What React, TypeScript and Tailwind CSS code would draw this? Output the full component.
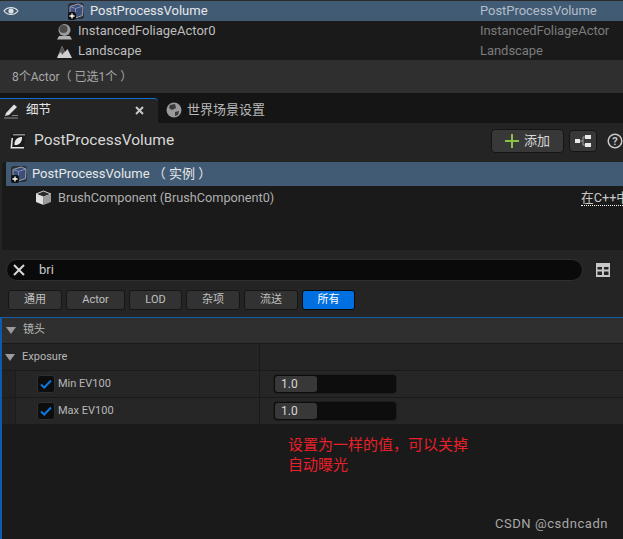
import React from "react";

function VolumeIcon() {
  return (
    <svg width="18" height="18" viewBox="0 0 18 18" className="shrink-0">
      <rect x="1" y="1" width="16" height="16" rx="3" fill="#2b2f3a" />
      <path d="M3 4.5 L11 2 L16 4 L15.5 13.5 L8 16 L3 13.5 Z" fill="#3d4f78" stroke="#9aa0ad" strokeWidth="1" />
      <path d="M3 4.5 L8.5 6.5 L16 4 M8.5 6.5 V16" fill="none" stroke="#7d8dbd" strokeWidth="1" />
      <rect x="1" y="10" width="8" height="8" rx="2" fill="#111" />
      <path d="M5 11.5 V16.5 M2.5 14 H7.5" stroke="#fff" strokeWidth="1.3" />
    </svg>
  );
}

function Eye() {
  return (
    <svg width="16" height="12" viewBox="0 0 16 12" className="shrink-0">
      <path d="M1 6 C4 1.5 12 1.5 15 6 C12 10.5 4 10.5 1 6 Z" fill="none" stroke="#e0e0e0" strokeWidth="1.2" />
      <circle cx="8" cy="6" r="2.6" fill="#e0e0e0" />
    </svg>
  );
}

function OutlinerRow({
  icon,
  name,
  type,
  selected,
  indent,
  h,
}: {
  icon: React.ReactNode;
  name: string;
  type: string;
  selected?: boolean;
  indent: string;
  h: string;
}) {
  return (
    <div className={`flex items-center ${h} ${selected ? "bg-[#415b75]" : "bg-[#1a1a1a]"}`}>
      <div className="w-[480px] flex items-center relative">
        {selected && (
          <span className="absolute left-[3px] top-1/2 -translate-y-1/2 flex">
            <Eye />
          </span>
        )}
        <div className={`${indent} flex items-center`}>
          <span className="w-[18px] h-[18px] flex items-center justify-center">{icon}</span>
          <span className={`ml-[5px] text-[13px] ${selected ? "text-[#e8e8e8]" : "text-[#bdbdbd]"}`}>{name}</span>
        </div>
      </div>
      <span className={`text-[13px] tracking-[-0.05px] ${selected ? "text-[#b4bcc6]" : "text-[#7c7c7c]"}`}>{type}</span>
    </div>
  );
}

function Filter({ label, w, active }: { label: string; w: string; active?: boolean }) {
  return (
    <div
      className={`${w} h-5 rounded-[3px] border flex items-center justify-center text-[11px] ${
        active ? "bg-[#0070e0] border-[#0a0a0a] text-white" : "bg-[#323232] border-[#151515] text-[#c0c0c0]"
      }`}
    >
      {label}
    </div>
  );
}

function Check() {
  return (
    <div className="w-[18px] h-[18px] rounded-[3px] bg-[#0d0d0d] border border-[#2f2f2f] flex items-center justify-center">
      <svg width="12" height="10" viewBox="0 0 12 10">
        <path d="M1 5.5 L4.2 8.5 L11 1.5" fill="none" stroke="#0f75e0" strokeWidth="2" />
      </svg>
    </div>
  );
}

function PropRow({ label }: { label: string }) {
  return (
    <div className="h-[27px] flex border-b border-[#1a1a1a] bg-[#262626]">
      <div className="w-[14px] shrink-0 bg-[#222222] border-r border-[#1c1c1c]" />
      <div className="w-[243px] shrink-0 flex items-center pl-[21px]">
        <Check />
        <span className="ml-[3px] text-[11px] text-[#b8b8b8]">{label}</span>
      </div>
      <div className="flex-1 flex items-center border-l border-[#1a1a1a] pl-[13px]">
        <div className="w-[124px] h-[20px] rounded-[4px] bg-[#0d0d0d] border border-[#1e1e1e] flex p-[1px]">
          <div className="w-[42px] rounded-[3px] bg-[#383838] text-[12px] text-[#d8d8d8] pl-[6px] leading-[16px]">1.0</div>
        </div>
      </div>
    </div>
  );
}

export default function App() {
  return (
    <div
      className="relative w-[623px] h-[539px] overflow-hidden bg-[#1a1a1a]"
      style={{ fontFamily: 'Roboto, "Noto Sans CJK SC", sans-serif' }}
    >
      <div className="h-px bg-[#2a2a2a]" />
      <OutlinerRow selected h="h-5" indent="pl-[67px]" icon={<VolumeIcon />} name="PostProcessVolume" type="PostProcessVolume" />
      <OutlinerRow
        h="h-5"
        indent="pl-[55px]"
        icon={
          <svg width="17" height="17" viewBox="0 0 17 17">
            <circle cx="8.5" cy="7" r="6" fill="#9a9a9a" />
            <circle cx="7.5" cy="6" r="4" fill="#4c4c4c" />
            <path d="M1 16.5 H16 L14 13 H3 Z" fill="#b0b0b0" />
          </svg>
        }
        name="InstancedFoliageActor0"
        type="InstancedFoliageActor"
      />
      <OutlinerRow
        h="h-[19px]"
        indent="pl-[55px]"
        icon={
          <svg width="17" height="16" viewBox="0 0 17 16">
            <path d="M1 15 L6 3 L9 9 L11.5 6 L16 15 Z" fill="#cfcfcf" />
            <path d="M6 3 L2.5 11.5 L5 9 L6 12 L8 9.5 L9 9 Z" fill="#555" />
          </svg>
        }
        name="Landscape"
        type="Landscape"
      />

      <div className="h-[33px] bg-[#2f2f2f] flex items-center pl-3 text-[12px] text-[#a8a8a8]">8个Actor（ 已选1个 ）</div>

      <div className="h-[30px] bg-[#151515] flex items-end">
        <div className="w-[158px] h-[25px] bg-[#242424] border-t border-[#0d6fd0] rounded-tr-[4px] flex items-center pl-[3px] pr-[14px] pb-[1px]">
          <svg width="16" height="16" viewBox="0 0 16 16" className="shrink-0">
            <path d="M3 10 L11 1.5 L14 4 L6 12 L2 13 Z" fill="#e0e0e0" />
            <path d="M1 15 H15 M9 12.5 H15" stroke="#8a8a8a" strokeWidth="1" />
          </svg>
          <span className="ml-[7px] text-[12.5px] text-[#e6e6e6]">细节</span>
          <svg width="9" height="9" viewBox="0 0 9 9" className="ml-auto">
            <path d="M1 1 L8 8 M8 1 L1 8" stroke="#c8c8c8" strokeWidth="2" />
          </svg>
        </div>
        <div className="h-[25px] flex items-center pl-[8px] pb-[1px]">
          <svg width="16" height="16" viewBox="0 0 16 16">
            <circle cx="8" cy="8" r="7.5" fill="#9a9a9a" />
            <path d="M4 3 L9 2 L10 6 L6 8 L3 6 Z M9 10 L13 9 L12 13 L9 14 Z" fill="#3a3a3a" />
          </svg>
          <span className="ml-[5px] text-[13px] text-[#b8b8b8]">世界场景设置</span>
        </div>
      </div>

      <div className="h-[35px] bg-[#242424] flex items-center pl-[10px] pt-[1px]">
        <svg width="16" height="16" viewBox="0 0 16 16" className="shrink-0">
          <path d="M2 0.5 H15.5 L14 15.5 H0.5 Z" fill="#1a1a1a" />
          <path d="M0.5 15.5 L1.5 5 H3 L2.2 14 H14 V15.5 Z" fill="#e8e8e8" />
          <path d="M3 1 H15 V2.5 H3 Z" fill="#8a8a8a" />
          <path d="M4.5 12 C4 6.5 8 4 12 4 C12.5 9 9 12.5 4.5 12 Z" fill="#e8e8e8" />
        </svg>
        <span className="ml-2 text-[15.5px] text-[#d8d8d8]">PostProcessVolume</span>
        <div className="ml-auto w-[73px] h-[24px] rounded-[4px] bg-[#383838] border border-[#151515] flex items-center justify-center">
          <svg width="14" height="14" viewBox="0 0 14 14">
            <path d="M7 0 V14 M0 7 H14" stroke="#8bc34a" strokeWidth="2" />
          </svg>
          <span className="ml-[5px] text-[13px] text-[#d8d8d8]">添加</span>
        </div>
        <div className="ml-[5px] w-[28px] h-[22px] rounded-[4px] bg-[#383838] border border-[#151515] flex items-center justify-center">
          <svg width="16" height="12" viewBox="0 0 16 12">
            <rect x="0" y="4" width="5" height="4" fill="#e8e8e8" />
            <rect x="10" y="0" width="6" height="4" fill="#e8e8e8" />
            <rect x="10" y="8" width="6" height="4" fill="#e8e8e8" />
            <path d="M5 6 H8 V2 H10 M8 6 V10 H10" fill="none" stroke="#a0a0a0" />
          </svg>
        </div>
        <svg width="16" height="16" viewBox="0 0 16 16" className="ml-[10px] shrink-0">
          <circle cx="8" cy="8" r="6.8" fill="none" stroke="#c8c8c8" strokeWidth="1.5" />
          <text x="8" y="12" textAnchor="middle" fontSize="11" fontWeight="700" fill="#c8c8c8">?</text>
        </svg>
      </div>

      <div className="h-[92px] pt-[4px] pl-[2px] bg-[#242424]">
        <div className="h-full bg-[#1a1a1a] rounded-tl-[4px] pl-[4px]">
          <div className="h-6 bg-[#415b75] flex items-center pl-1 text-[13px] text-[#e8e8e8]">
            <VolumeIcon />
            <span className="ml-[4px] whitespace-pre">PostProcessVolume （ 实例 ）</span>
          </div>
          <div className="h-6 flex items-center pl-[29px] text-[12.7px] text-[#b0b0b0]">
            <svg width="17" height="16" viewBox="0 0 17 16" className="shrink-0">
              <path d="M8.5 1 L16 4 L8.5 7 L1 4 Z" fill="#2a2a2a" stroke="#cfcfcf" />
              <path d="M1 4 V12 L8.5 15 V7 Z" fill="#e0e0e0" />
              <path d="M16 4 V12 L8.5 15 V7 Z" fill="#9a9a9a" />
            </svg>
            <span className="ml-[6px] flex-1 whitespace-nowrap">BrushComponent (BrushComponent0)</span>
            <span className="w-[42px] overflow-hidden whitespace-nowrap text-[#c8c8c8] border-b border-dotted border-white leading-[14px]">在C++中</span>
          </div>
        </div>
      </div>

      <div className="h-[67px] bg-[#242424] pt-[9px] pl-[6px]">
        <div className="flex items-center">
          <div className="w-[577px] h-[22px] rounded-full bg-[#0a0a0a] border border-[#2f2f2f] flex items-center pl-[5px]">
            <svg width="14" height="14" viewBox="0 0 14 14" className="shrink-0">
              <path d="M2 2 L12 12 M12 2 L2 12" stroke="#d8d8d8" strokeWidth="2" />
            </svg>
            <span className="ml-[13px] text-[13px] text-[#c8c8c8]">bri</span>
          </div>
          <svg width="14" height="14" viewBox="0 0 14 14" className="ml-[13px]">
            <path d="M0 0 H14 V14 H0 Z M1.5 4 V6.5 H6 V4 Z M8 4 V6.5 H12.5 V4 Z M1.5 8.5 V12 H6 V8.5 Z M8 8.5 V12 H12.5 V8.5 Z" fill="#c8c8c8" fillRule="evenodd" />
          </svg>
        </div>
        <div className="flex gap-[4px] mt-[9px] pl-[2px]">
          <Filter label="通用" w="w-[54px]" />
          <Filter label="Actor" w="w-[59px]" />
          <Filter label="LOD" w="w-[53px]" />
          <Filter label="杂项" w="w-[54px]" />
          <Filter label="流送" w="w-[54px]" />
          <Filter label="所有" w="w-[53px]" active />
        </div>
      </div>

      <div className="border-l-2 border-[#0d5cab] h-[222px]">
        <div className="h-px bg-[#125ea8] -ml-[2px]" />
        <div className="h-[26px] bg-[#2f2f2f] border-b border-[#1a1a1a] flex items-center pl-[4px] text-[11px] text-[#b8b8b8]">
          <svg width="10" height="7" viewBox="0 0 10 7"><path d="M0 0 H10 L5 7 Z" fill="#9a9a9a" /></svg>
          <span className="ml-[7px]">镜头</span>
        </div>
        <div className="h-[27px] flex bg-[#242424] border-b border-[#1a1a1a]">
          <div className="w-[257px] flex items-center pl-[3px] text-[11px] text-[#b8b8b8]">
            <svg width="10" height="7" viewBox="0 0 10 7"><path d="M0 0 H10 L5 7 Z" fill="#9a9a9a" /></svg>
            <span className="ml-[7px]">Exposure</span>
          </div>
          <div className="flex-1 border-l border-[#1a1a1a]" />
        </div>
        <PropRow label="Min EV100" />
        <PropRow label="Max EV100" />
      </div>

      <div className="absolute left-[288px] top-[435px] text-[15px] leading-[20px] text-[#e8202a]">
        设置为一样的值，可以关掉
        <br />
        自动曝光
      </div>
      <div className="absolute right-[15px] top-[514px] text-[13px] tracking-[0.55px] text-[#a8a8a8]">CSDN @csdncadn</div>
    </div>
  );
}
